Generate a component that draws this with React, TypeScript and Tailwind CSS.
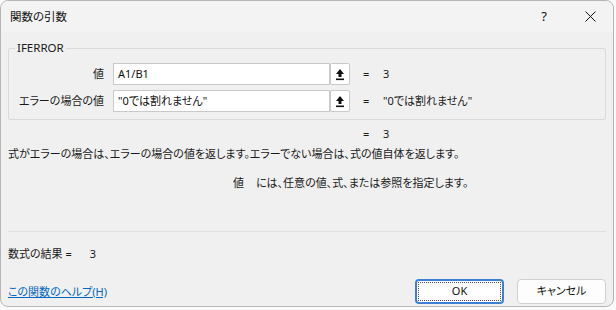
import React from "react";

const font = { fontFamily: '"Noto Sans", "Noto Sans CJK JP", sans-serif' };

function UpIcon() {
  return (
    <svg width="10" height="13" viewBox="0 0 10 13">
      <path d="M5 1 L9 6 H6.5 V9 H3.5 V6 H1 Z" fill="#111" />
      <rect x="1" y="10.5" width="8" height="1.6" fill="#111" />
    </svg>
  );
}

function ArgRow({ label, value, result }: { label: string; value: string; result: string }) {
  return (
    <div className="flex items-center h-[22px]">
      <div className="w-[95px] text-right text-[11px] text-[#1a1a1a]">{label}</div>
      <div className="ml-[9px] flex h-[22px] w-[237px]">
        <div className="flex-1 bg-white border border-[#c9c9c9] flex items-center pl-[4px] text-[11px] text-[#111]">
          {value}
        </div>
        <div className="w-[20px] bg-white border border-[#c9c9c9] rounded-[2px] flex items-center justify-center">
          <UpIcon />
        </div>
      </div>
      <div className="ml-[13px] w-[20px] text-[11px] text-[#1a1a1a]">=</div>
      <div className="text-[11px] text-[#1a1a1a]">{result}</div>
    </div>
  );
}

export default function App() {
  return (
    <div className="w-[616px] h-[310px] bg-[#fafafa] overflow-hidden" style={font}>
      <div className="w-[614px] h-[307px] rounded-[8px] border border-[#b5b5b5] bg-[#f0f0f0] overflow-hidden flex flex-col [font-feature-settings:'palt']">
        <div className="h-[31px] flex items-center bg-[#f3f3f3] shrink-0">
          <div className="pl-[9px] text-[11.5px] text-[#111]">関数の引数</div>
          <div className="ml-auto w-[46px] text-center text-[13px] text-[#111]">?</div>
          <div className="w-[46px] flex items-center justify-center">
            <svg width="11" height="11" viewBox="0 0 11 11">
              <path d="M0.5 0.5 L10.5 10.5 M10.5 0.5 L0.5 10.5" stroke="#111" strokeWidth="1" />
            </svg>
          </div>
        </div>
        <div className="px-[7px] flex flex-col flex-1">
          <fieldset className="mt-[8px] border border-[#dadada] rounded-[2px] pb-[7px]">
            <legend className="ml-[6px] px-[2px] text-[11.5px] leading-[16px] text-[#1a1a1a]">IFERROR</legend>
            <div className="pt-[7px] flex flex-col gap-[5px]">
              <ArgRow label="値" value="A1/B1" result="3" />
              <ArgRow label="エラーの場合の値" value={'"0では割れません"'} result={'"0では割れません"'} />
            </div>
          </fieldset>
          <div className="mt-[6px] flex text-[11px] text-[#1a1a1a] h-[16px] items-center">
            <div className="ml-[355px] w-[20px]">=</div>
            <div>3</div>
          </div>
          <div className="mt-[4px] text-[11px] text-[#1a1a1a] leading-[16px]">
            式がエラーの場合は、エラーの場合の値を返します。エラーでない場合は、式の値自体を返します。
          </div>
          <div className="mt-[13px] text-[11px] text-[#1a1a1a] leading-[16px] flex">
            <span className="ml-[225px] w-[23px]">値</span>
            <span>には、任意の値、式、または参照を指定します。</span>
          </div>
          <div className="mt-auto border-t border-[#e0e0e0]"></div>
          <div className="h-[74px] flex flex-col">
            <div className="mt-[14px] text-[11px] text-[#1a1a1a] leading-[16px] flex">
              <span>数式の結果 =</span>
              <span className="ml-[18px]">3</span>
            </div>
            <div className="mt-[17px] flex items-center">
              <a className="text-[11px] text-[#0067c0] underline leading-[16px]">この関数のヘルプ(H)</a>
              <div className="ml-auto flex gap-[13px]">
                <div className="w-[89px] h-[25px] bg-white border-2 border-[#3c7fd4] rounded-[4px] flex items-center justify-center text-[11px] text-[#111]">
                  <div className="border border-dotted border-[#555] w-[83px] h-[19px] flex items-center justify-center">OK</div>
                </div>
                <div className="w-[89px] h-[25px] bg-[#fdfdfd] border border-[#d0d0d0] rounded-[4px] flex items-center justify-center text-[11px] text-[#111]">
                  キャンセル
                </div>
              </div>
            </div>
          </div>
        </div>
      </div>
    </div>
  );
}
